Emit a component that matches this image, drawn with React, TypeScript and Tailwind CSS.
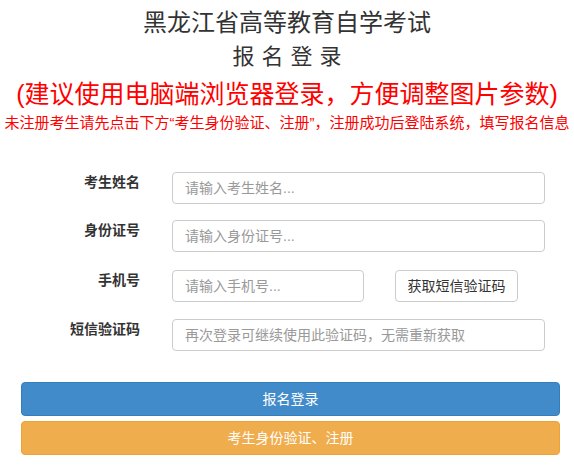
import React from 'react';

const fields = [
  { label: '考生姓名', placeholder: '请输入考生姓名...' },
  { label: '身份证号', placeholder: '请输入身份证号...' },
];

export default function App() {
  return (
    <div
      className="w-[574px] h-[465px] bg-white text-[#333] overflow-hidden"
      style={{ fontFamily: '"Liberation Sans", "Noto Sans CJK SC", sans-serif' }}
    >
      {/* header */}
      <div className="text-center">
        <h1 className="pt-[6px] text-[24px] leading-[34px]">黑龙江省高等教育自学考试</h1>
        <h2 className="mt-[3px] text-[22px] leading-[28px] tracking-[7px] pl-[7px]">报名登录</h2>
        <p className="mt-[6px] text-[25px] leading-[34px] text-[#ff0000] whitespace-nowrap">
          (建议使用电脑端浏览器登录，方便调整图片参数)
        </p>
        <p className="mt-[2px] text-[15px] leading-[20px] text-[#ff0000] whitespace-nowrap">
          未注册考生请先点击下方“考生身份验证、注册”，注册成功后登陆系统，填写报名信息
        </p>
      </div>

      {/* form */}
      <form className="mt-[39px]" onSubmit={e => e.preventDefault()}>
        {fields.map((f, i) => (
          <div key={f.label} className={`flex ${i === 0 ? '' : 'mt-[16px]'}`}>
            <label className="w-[140px] text-right text-[14px] font-bold leading-[20px]">{f.label}</label>
            <input
              className="ml-[32px] w-[373px] h-[32px] rounded-[4px] border border-[#ccc] px-[12px] text-[14px] placeholder:text-[#999] outline-none"
              placeholder={f.placeholder}
            />
          </div>
        ))}

        <div className="flex mt-[18px]">
          <label className="w-[140px] text-right text-[14px] font-bold leading-[20px]">手机号</label>
          <input
            className="ml-[32px] w-[192px] h-[32px] rounded-[4px] border border-[#ccc] px-[12px] text-[14px] placeholder:text-[#999] outline-none"
            placeholder="请输入手机号..."
          />
          <button
            type="button"
            className="ml-[31px] w-[123px] h-[32px] rounded-[4px] border border-[#ccc] bg-white text-[14px] text-[#333]"
          >
            获取短信验证码
          </button>
        </div>

        <div className="flex mt-[17px]">
          <label className="w-[140px] text-right text-[14px] font-bold leading-[20px]">短信验证码</label>
          <input
            className="ml-[32px] w-[373px] h-[32px] rounded-[4px] border border-[#ccc] px-[12px] text-[14px] placeholder:text-[#999] outline-none"
            placeholder="再次登录可继续使用此验证码，无需重新获取"
          />
        </div>

        <div className="mt-[31px] ml-[21px] w-[539px] flex flex-col gap-[5px]">
          <button
            type="submit"
            className="h-[34px] rounded-[4px] border border-[#357ebd] bg-[#428bca] text-white text-[14px]"
          >
            报名登录
          </button>
          <button
            type="button"
            className="h-[34px] rounded-[4px] border border-[#eea236] bg-[#f0ad4e] text-white text-[14px]"
          >
            考生身份验证、注册
          </button>
        </div>
      </form>
    </div>
  );
}
